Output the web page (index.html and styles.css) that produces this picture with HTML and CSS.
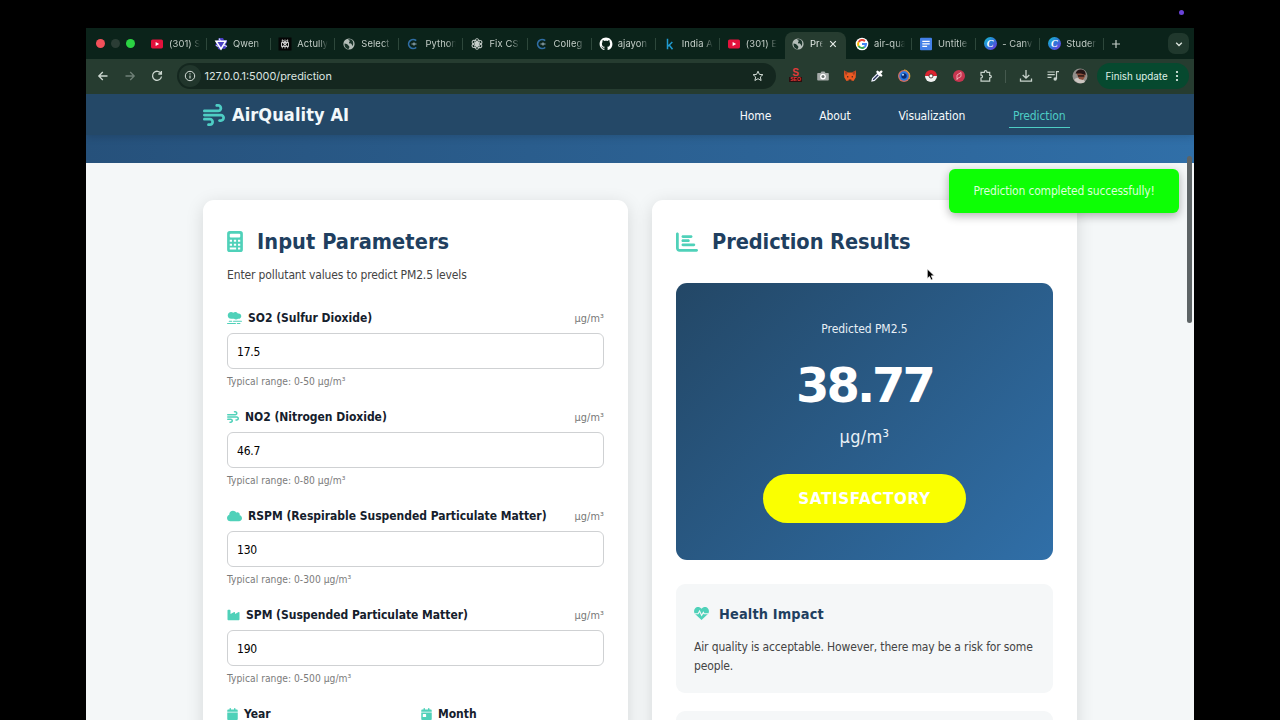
FILE: index.html
```html
<!DOCTYPE html>
<html lang="en">
<head>
  <meta charset="UTF-8">
  <meta name="viewport" content="width=device-width, initial-scale=1.0">
  <title>AirQuality AI - Prediction</title>
  <link rel="stylesheet" href="styles.css">
</head>
<body>

<!-- shared icons -->
<svg class="sprite" xmlns="http://www.w3.org/2000/svg">
  <symbol id="youtube" viewBox="0 0 14 14"><rect x="1" y="2.6" width="12" height="8.8" rx="1.6" fill="#e3123c"/><path d="M5.6 5v4L9.2 7z" fill="#fff"/></symbol>
  <symbol id="globe" viewBox="0 0 14 14"><circle cx="7" cy="7" r="5.6" fill="#b4bdb8"/><path d="M2.6 6.4c1.5.1 3 .5 3.4 1.7.2.9 1.3.8 1.4 1.8.1.8-.7 1-.8 2.2C4 11.8 2.2 9.5 2.6 6.4zM6.2 2.300c.2 1.2 1.5.8 1.6 1.8.1.9-1 .8-.8 1.700.3.9 1.8.2 2.500 1.100.6.8.4 1.800 1.200 1.800 1.300-2.700.4-6-2.600-6.500z" fill="#1b352b"/></symbol>
  <symbol id="codec" viewBox="0 0 14 14"><path d="M10.2 3.7A4.500 4.500 0 1 0 10.200 10.300" fill="none" stroke="#2f6da4" stroke-width="1.7"/><path d="M5.500 7h5M8 5.600v2.800" stroke="#93aab6" stroke-width="1.2"/></symbol>
  <symbol id="wind" viewBox="0 0 512 512"><path d="M288 32c0 17.7 14.3 32 32 32h32c17.7 0 32 14.3 32 32s-14.3 32-32 32H32c-17.7 0-32 14.3-32 32s14.3 32 32 32H352c53 0 96-43 96-96s-43-96-96-96H320c-17.7 0-32 14.3-32 32zm64 352c0 17.7 14.3 32 32 32h32c53 0 96-43 96-96s-43-96-96-96H32c-17.7 0-32 14.3-32 32s14.3 32 32 32H416c17.7 0 32 14.3 32 32s-14.3 32-32 32H384c-17.7 0-32 14.3-32 32zM128 512h32c53 0 96-43 96-96s-43-96-96-96H32c-17.7 0-32 14.3-32 32s14.3 32 32 32H160c17.7 0 32 14.3 32 32s-14.3 32-32 32H128c-17.7 0-32 14.3-32 32s14.3 32 32 32z"/></symbol>
</svg>

<div class="recording-dot"></div>

<div class="browser">
  <div class="tab-strip">
    <div class="lights"><i class="light red"></i><i class="light dim"></i><i class="light green"></i></div>
    <div class="tab"><svg><use href="#youtube"/></svg><span>(301) S</span></div>
    <div class="tab"><svg viewBox="0 0 14 14"><path d="M5 1h4l1 2h2.500l.7 2-1.400 2.200L13 9.500 11 12l-2.500-.3L7 13 4 12 3.500 9.500 1 8.500 2.400 6 1 4l3-.5z" fill="#4a3fc4"/><path d="M2 4.200h9.700L7 12z" fill="none" stroke="#fff" stroke-width="1.500"/><path d="M5 1.500 6.500 4M13 9.500 9.500 8M2 8.500l2.500 1" stroke="#d9d6ff" stroke-width="1.200"/></svg><span>Qwen</span></div>
    <div class="tab"><svg viewBox="0 0 14 14"><rect x=".5" y=".5" width="13" height="13" fill="#050505"/><path d="M7 2.500v9M3.500 5.500h7v4h-7zM4.300 2.800v2.700L7 7.500l2.700-2V2.800L7 5.200zM4.300 11.300V9.500L7 6.800l2.700 2.700v1.800" fill="none" stroke="#ddd" stroke-width=".9"/></svg><span>Actully</span></div>
    <div class="tab"><svg><use href="#globe"/></svg><span>Select</span></div>
    <div class="tab"><svg><use href="#codec"/></svg><span>Python</span></div>
    <div class="tab"><svg viewBox="0 0 14 14" fill="none" stroke="#cbd2ce" stroke-width=".9"><ellipse cx="7" cy="4.800" rx="2.200" ry="3.200"/><ellipse cx="7" cy="4.800" rx="2.200" ry="3.200" transform="rotate(60 7 7)"/><ellipse cx="7" cy="4.800" rx="2.200" ry="3.200" transform="rotate(120 7 7)"/><ellipse cx="7" cy="4.800" rx="2.200" ry="3.200" transform="rotate(180 7 7)"/><ellipse cx="7" cy="4.800" rx="2.200" ry="3.200" transform="rotate(240 7 7)"/><ellipse cx="7" cy="4.800" rx="2.200" ry="3.200" transform="rotate(300 7 7)"/></svg><span>Fix CSV</span></div>
    <div class="tab"><svg><use href="#codec"/></svg><span>Colleg</span></div>
    <div class="tab"><svg viewBox="-.7 -.7 17.4 17.4"><path fill="#fff" d="M8 0C3.58 0 0 3.58 0 8c0 3.54 2.29 6.53 5.47 7.59.4.07.55-.17.55-.38 0-.19-.01-.82-.01-1.49-2.01.37-2.53-.49-2.69-.94-.09-.23-.48-.94-.82-1.13-.28-.15-.68-.52-.01-.53.63-.01 1.08.58 1.23.82.72 1.21 1.87.87 2.33.66.07-.52.28-.87.51-1.07-1.78-.2-3.64-.89-3.64-3.95 0-.87.31-1.59.82-2.15-.08-.2-.36-1.02.08-2.12 0 0 .67-.21 2.2.82.64-.18 1.32-.27 2-.27.68 0 1.36.09 2 .27 1.53-1.04 2.2-.82 2.2-.82.44 1.1.16 1.92.08 2.12.51.56.82 1.27.82 2.15 0 3.07-1.87 3.75-3.65 3.95.29.25.54.73.54 1.48 0 1.07-.01 1.93-.01 2.2 0 .21.15.46.55.38A8.01 8.01 0 0 0 16 8c0-4.42-3.58-8-8-8z"/></svg><span>ajayon</span></div>
    <div class="tab"><svg viewBox="0 0 14 14"><path d="M4.500 1.800v10.500M9.300 5 5 9.200M6.200 8l3.300 4.300" fill="none" stroke="#209bd0" stroke-width="1.500"/></svg><span>India A</span></div>
    <div class="tab no-sep"><svg><use href="#youtube"/></svg><span>(301) E</span></div>
    <div class="tab active"><svg><use href="#globe"/></svg><span>Pre</span><svg class="close" viewBox="0 0 8 8"><path d="m1.200 1.200 5.600 5.600M6.800 1.200 1.200 6.800" stroke="#e6ece8" stroke-width="1.200"/></svg></div>
    <div class="tab"><svg viewBox="0 0 14 14" fill="none" stroke-width="2"><circle cx="7" cy="7" r="6.300" fill="#fff"/><path d="M3.700 5A4 4 0 0 1 9.900 4.200" stroke="#ea4335"/><path d="M3.600 4.900A4 4 0 0 0 3.600 9.100" stroke="#fbbc05"/><path d="M3.600 9A4 4 0 0 0 9.600 10" stroke="#34a853"/><path d="M7 7h4A4 4 0 0 1 9.500 10.100" stroke="#4285f4"/></svg><span>air-qua</span></div>
    <div class="tab"><svg viewBox="0 0 14 14"><rect x="1" y=".7" width="12" height="12.600" rx="1" fill="#4380e8"/><path d="M3.300 4.300h7.400M3.300 6.800h7.400M3.300 9.300h4.800" stroke="#fff" stroke-width="1.300"/></svg><span>Untitle</span></div>
    <div class="tab"><b class="canva">C</b><span>- Canv</span></div>
    <div class="tab"><b class="canva">C</b><span>Studer</span></div>
    <svg class="new-tab" viewBox="0 0 10 10"><path d="M5 1v8M1 5h8" stroke="#c5cfc9" stroke-width="1.200"/></svg>
    <div class="tab-search"><svg viewBox="0 0 8 8"><path d="M1.200 2.800 4 5.500l2.800-2.700" fill="none" stroke="#dce5df" stroke-width="1.300"/></svg></div>
  </div>

  <div class="toolbar">
    <svg class="nav-icon" viewBox="0 0 14 14"><path d="M11.500 7H3M6.800 3 2.800 7l4 4"/></svg>
    <svg class="nav-icon off" viewBox="0 0 14 14"><path d="M2.500 7H11M7.200 3l4 4-4 4"/></svg>
    <svg class="nav-icon" viewBox="0 0 14 14"><path d="M11 4.600A4.500 4.500 0 1 0 11.500 7.500M11.400 2v3H8.300"/></svg>
    <div class="url-bar">
      <div class="site-info"><svg viewBox="0 0 12 12"><circle cx="6" cy="6" r="4.700" fill="none" stroke="#d6ded9"/><path d="M6 5.500v3M6 3.200v1.200" stroke="#d6ded9" stroke-width="1.100"/></svg></div>
      <span class="url">127.0.0.1:5000/prediction</span>
      <svg class="star" viewBox="0 0 12 12"><path d="m6 1.200 1.400 3.200 3.500.3-2.600 2.300.8 3.500L6 8.700l-3.100 1.800.8-3.500L1.100 4.700l3.500-.3z" fill="none" stroke="#d2dcd6"/></svg>
    </div>
    <div class="extensions">
      <div class="seo"><b>S</b><b>SEO</b></div>
      <svg viewBox="0 0 14 14"><path d="M2 4h2.500l1-1.500h3l1 1.500H12q.8 0 .8.800v6q0 .8-.8.800H2q-.8 0-.8-.8v-6Q1.200 4 2 4z" fill="#a4aaa8"/><circle cx="7" cy="7.600" r="2.900" fill="#fff"/><circle cx="7" cy="7.600" r="1.500" fill="#6d7673"/></svg>
      <svg viewBox="0 0 14 14"><path d="m1 1.500 4 2h4l4-2-.3 7-2.200 3.500-2-.6H5.500l-2 .6L1.300 8.500z" fill="#ec5a22"/><path d="m1 1.500 4 2-2 3zM13 1.500l-4 2 2 3z" fill="#a83f22"/><path d="m4 7 2 1-2 .5zM10 7 8 8l2 .5zM5.700 10.500h2.600v1.300H5.700z" fill="#30221e"/></svg>
      <svg viewBox="0 0 14 14"><path d="m2 12 .6-2.400 5-5 1.800 1.800-5 5z" fill="#28345c" stroke="#eef0fb" stroke-width="1.200"/><path d="m7.500 2.800 3.700 3.700M9.300 4.700l2-2" stroke="#fff" stroke-width="2.400" stroke-linecap="round"/></svg>
      <svg viewBox="0 0 14 14"><circle cx="7" cy="7" r="6" fill="#cf6f62"/><path d="M7 1a6 6 0 0 1 5 9" fill="none" stroke="#dfb03b"/><circle cx="7" cy="7" r="4.700" fill="#2879e2"/><circle cx="7" cy="7" r="2.700" fill="#0b2b73"/><circle cx="6" cy="5.800" r="1" fill="#b8dfff"/></svg>
      <svg viewBox="0 0 14 14"><path d="M1 7a6 6 0 0 1 12 0z" fill="#dc2330"/><path d="M1 7a6 6 0 0 0 12 0z" fill="#f0f2f1"/><circle cx="7" cy="7" r="2" fill="#fff" stroke="#3d2525" stroke-width=".8"/></svg>
      <svg viewBox="0 0 14 14"><circle cx="7" cy="7" r="6" fill="#c73550"/><path d="M5 11V6l4-2.500v4L5 9.800" fill="none" stroke="#f3b4bc" stroke-width=".9"/></svg>
      <svg viewBox="0 0 14 14"><path d="M2 3.300h3.300q0-1.600 1.300-1.600T8 3.300h2.700v3q1.700 0 1.700 1.300t-1.700 1.300v3.300H2V9q1.500 0 1.500-1.400T2 6.200z" fill="none" stroke="#c8d3cc" stroke-width="1.200"/></svg>
    </div>
    <i class="divider"></i>
    <div class="tools">
      <svg viewBox="0 0 14 14"><path d="M7 1v8M3.700 6 7 9.200 10.300 6M1.500 9.500v2.700h11V9.500" fill="none" stroke="#c8d3cc" stroke-width="1.300"/></svg>
      <svg viewBox="0 0 14 14"><path d="M1.500 3h7.300M1.500 5.700h7.300M1.500 8.400h4M10.500 10V2.600h2.500" fill="none" stroke="#c8d3cc" stroke-width="1.200"/><circle cx="9.200" cy="10" r="1.700" fill="#c8d3cc"/></svg>
      <svg class="avatar" viewBox="0 0 16 16"><circle cx="8" cy="8" r="7.500" fill="#918f8b"/><path d="M2 12q2-3 6-2t5 4Q8 17.500 2 12z" fill="#ccc6c1"/><path d="M4.500 5.500Q6 1 10 2q4 1 3.300 6L11 12 7 11z" fill="#8b4f3c"/><path d="M3.500 5.500Q5 .8 10 1.500q4 1 3.600 5.500L9 5.500z" fill="#241516"/><path d="M6 7.300h6v1.300H6z" fill="#171214"/></svg>
    </div>
    <div class="update">Finish update<svg viewBox="0 0 4 12" fill="#eef7f2"><circle cx="2" cy="2" r="1.100"/><circle cx="2" cy="6" r="1.100"/><circle cx="2" cy="10" r="1.100"/></svg></div>
  </div>

  <div class="page">
    <header class="navbar">
      <div class="logo"><svg class="icon"><use href="#wind"/></svg><span>AirQuality AI</span></div>
      <nav>
        <a>Home</a>
        <a>About</a>
        <a>Visualization</a>
        <a class="current">Prediction</a>
      </nav>
    </header>
    <div class="hero"></div>

    <main class="content">
      <section class="card">
        <h2><svg class="icon calc" viewBox="0 0 384 512"><path fill-rule="evenodd" d="M64 0h256q64 0 64 64v384q0 64-64 64H64q-64 0-64-64V64Q0 0 64 0zM88 64q-24 0-24 24v48q0 24 24 24h208q24 0 24-24V88q0-24-24-24zM64 216v48h56v-48zM164 216v48h56v-48zM264 216v48h56v-48zM64 312v48h56v-48zM164 312v48h56v-48zM264 312v48h56v-48zM64 400v48h156v-48zM264 400v48h56v-48z"/></svg><span>Input Parameters</span></h2>
        <p class="intro">Enter pollutant values to predict PM2.5 levels</p>

        <div class="field">
          <label><svg class="icon wide" viewBox="0 0 640 512"><path d="M32 144c0 79.5 64.5 144 144 144H299.3c22.6 19.9 52.2 32 84.7 32s62.1-12.1 84.7-32H496c61.9 0 112-50.1 112-112s-50.1-112-112-112c-10.7 0-21 1.5-30.8 4.3C443.8 27.7 401.1 0 352 0c-32.6 0-62.4 12.2-85.1 32.3C242.1 12.2 210.5 0 176 0C96.5 0 32 64.5 32 144zM616 368H280c-13.3 0-24 10.7-24 24s10.7 24 24 24H616c13.3 0 24-10.7 24-24s-10.7-24-24-24zm-64 96H440c-13.3 0-24 10.7-24 24s10.7 24 24 24H552c13.3 0 24-10.7 24-24s-10.7-24-24-24zm-192 0H24c-13.3 0-24 10.7-24 24s10.7 24 24 24H360c13.3 0 24-10.7 24-24s-10.7-24-24-24zM224 392c0-13.3-10.7-24-24-24H96c-13.3 0-24 10.7-24 24s10.7 24 24 24H200c13.3 0 24-10.7 24-24z"/></svg><span>SO2 (Sulfur Dioxide)</span><em>µg/m³</em></label>
          <input type="text" value="17.5">
          <small>Typical range: 0-50 µg/m³</small>
        </div>
        <div class="field">
          <label><svg class="icon"><use href="#wind"/></svg><span>NO2 (Nitrogen Dioxide)</span><em>µg/m³</em></label>
          <input type="text" value="46.7">
          <small>Typical range: 0-80 µg/m³</small>
        </div>
        <div class="field">
          <label><svg class="icon wide" viewBox="0 0 640 512"><path d="M0 336c0 79.5 64.5 144 144 144H512c70.7 0 128-57.3 128-128c0-61.9-44-113.6-102.4-125.4c4.1-10.7 6.4-22.4 6.4-34.6c0-53-43-96-96-96c-19.7 0-38.1 6-53.3 16.2C367 64.2 315.3 32 256 32C167.6 32 96 103.6 96 192c0 2.7 .1 5.4 .2 8.1C40.2 219.8 0 273.2 0 336z"/></svg><span>RSPM (Respirable Suspended Particulate Matter)</span><em>µg/m³</em></label>
          <input type="text" value="130">
          <small>Typical range: 0-300 µg/m³</small>
        </div>
        <div class="field">
          <label><svg class="icon factory" viewBox="0 0 512 512"><path d="M32 32C14.3 32 0 46.3 0 64V432c0 26.5 21.5 48 48 48H464c26.5 0 48-21.5 48-48V152.2c0-18.2-19.4-29.7-35.4-21.1L320 215.4V152.2c0-18.2-19.4-29.7-35.4-21.1L128 215.4V64c0-17.7-14.3-32-32-32H32z"/></svg><span>SPM (Suspended Particulate Matter)</span><em>µg/m³</em></label>
          <input type="text" value="190">
          <small>Typical range: 0-500 µg/m³</small>
        </div>
        <div class="field-row">
          <label><svg class="icon narrow" viewBox="0 0 448 512"><path d="M96 32V64H48C21.5 64 0 85.5 0 112v48H448V112c0-26.5-21.5-48-48-48H352V32c0-17.7-14.3-32-32-32s-32 14.3-32 32V64H160V32c0-17.7-14.3-32-32-32S96 14.3 96 32zM448 192H0V464c0 26.5 21.5 48 48 48H400c26.5 0 48-21.5 48-48V192z"/></svg><span>Year</span></label>
          <label><svg class="icon narrow" viewBox="0 0 448 512"><path fill-rule="evenodd" d="M96 32V64H48C21.5 64 0 85.5 0 112v48H448V112c0-26.5-21.5-48-48-48H352V32c0-17.7-14.3-32-32-32s-32 14.3-32 32V64H160V32c0-17.7-14.3-32-32-32S96 14.3 96 32zM448 192H0V464c0 26.5 21.5 48 48 48H400c26.5 0 48-21.5 48-48V192zM80 256h112q16 0 16 16v96q0 16-16 16H80q-16 0-16-16v-96q0-16 16-16z"/></svg><span>Month</span></label>
        </div>
      </section>

      <section class="card">
        <h2 class="results-title"><svg class="icon" viewBox="0 0 512 512"><path d="M32 32c17.7 0 32 14.3 32 32V400c0 8.8 7.2 16 16 16H480c17.7 0 32 14.3 32 32s-14.3 32-32 32H80c-44.2 0-80-35.8-80-80V64C0 46.3 14.3 32 32 32zm96 96c0-17.7 14.3-32 32-32l192 0c17.7 0 32 14.3 32 32s-14.3 32-32 32H160c-17.7 0-32-14.3-32-32zm32 64H288c17.7 0 32 14.3 32 32s-14.3 32-32 32H160c-17.7 0-32-14.3-32-32s14.3-32 32-32zm0 96H416c17.7 0 32 14.3 32 32s-14.3 32-32 32H160c-17.7 0-32-14.3-32-32s14.3-32 32-32z"/></svg><span>Prediction Results</span></h2>
        <div class="result">
          <div class="result-label">Predicted PM2.5</div>
          <div class="result-value">38.77</div>
          <div class="result-unit">µg/m³</div>
          <div class="badge">SATISFACTORY</div>
        </div>
        <div class="info">
          <h3><svg class="icon" viewBox="0 0 512 512"><path d="M256 480 36 270C-10 220-10 140 36 85 95 20 190 20 256 92 322 20 417 20 476 85c46 55 46 135 0 185z"/><path d="M20 265h120l50-95 70 150 60-100 25 45h145" fill="none" stroke="#f5f7f8" stroke-width="38"/></svg><span>Health Impact</span></h3>
          <p>Air quality is acceptable. However, there may be a risk for some people.</p>
        </div>
        <div class="info"></div>
      </section>
    </main>

    <div class="toast">Prediction completed successfully!</div>
    <div class="scroll-thumb"></div>
    <svg class="cursor" viewBox="0 0 10 14"><path d="M1 1v10.200l2.400-2.100L5.100 13l1.900-.8-1.700-3.800h3.300z" fill="#000" stroke="#fff" stroke-width=".7"/></svg>
  </div>
</div>

</body>
</html>
```

FILE: styles.css
```css
* {
  box-sizing: border-box;
}

body {
  margin: 0;
  height: 720px;
  overflow: hidden;
  background-color: #000;
  font-family: "DejaVu Sans Condensed", "DejaVu Sans", sans-serif;
  font-size: 12px;
}

svg {
  display: block;
  flex-shrink: 0;
}

.sprite {
  position: absolute;
  width: 0;
  height: 0;
}

.recording-dot {
  position: absolute;
  left: 1179px;
  top: 10px;
  width: 5px;
  height: 5px;
  border-radius: 50%;
  background-color: #6a43d8;
}

/* browser window */
.browser {
  width: 1108px;
  height: 692px;
  margin: 28px 0 0 86px;
  overflow: hidden;
  background-color: #263c30;
  font-family: Inter, sans-serif;
}

.tab-strip {
  display: flex;
  align-items: center;
  height: 31px;
  background-color: #0b231a;
}

.lights {
  display: flex;
  gap: 5.5px;
  width: 57px;
  padding-left: 9.5px;
}

.light {
  width: 9.5px;
  height: 9.5px;
  border-radius: 50%;
}

.red { background-color: #f2505a; }
.dim { background-color: #2b3d35; }
.green { background-color: #2bd343; }

.tab {
  position: relative;
  display: flex;
  align-items: center;
  width: 64.1px;
  height: 31px;
  padding-left: 7px;
  color: #c4cec8;
  font-size: 9.4px;
}

.tab svg {
  width: 14px;
  height: 14px;
  margin-right: 5px;
}

.tab span {
  width: 31px;
  overflow: hidden;
  white-space: nowrap;
  letter-spacing: 0.1px;
  -webkit-mask-image: linear-gradient(90deg, #000 70%, transparent);
  mask-image: linear-gradient(90deg, #000 70%, transparent);
}

.tab:not(.active):not(.no-sep)::after {
  content: "";
  position: absolute;
  right: 0;
  top: 10px;
  width: 1px;
  height: 12px;
  background-color: #2d473b;
}

.tab.active {
  width: 61px;
  height: 27px;
  margin: 4px 1.5px 0;
  padding: 0 0 4px 5.5px;
  border-radius: 8px 8px 0 0;
  background-color: #263c30;
  color: #e6ece8;
}

.tab.active span {
  width: 13px;
}

.tab svg.close {
  width: 8px;
  height: 8px;
  margin: 0 0 0 6px;
}

.canva {
  width: 13px;
  height: 13px;
  margin: 0 5.5px 0 0.5px;
  border-radius: 50%;
  background: linear-gradient(135deg, #16c0cf, #2d78d8 50%, #7a2be0);
  color: #fff;
  font: italic bold 10px/13px "Liberation Serif", serif;
  text-align: center;
}

.new-tab {
  width: 10px;
  height: 10px;
  margin-left: 7px;
}

.tab-search {
  display: flex;
  align-items: center;
  justify-content: center;
  width: 21px;
  height: 21px;
  margin-left: auto;
  margin-right: 5px;
  border-radius: 7px;
  background-color: #20382d;
}

.tab-search svg {
  width: 8px;
  height: 8px;
}

.toolbar {
  display: flex;
  align-items: center;
  height: 35px;
  padding: 0 5px 1px 9.5px;
}

.nav-icon {
  width: 14px;
  height: 14px;
  margin-right: 13px;
  fill: none;
  stroke: #cdd8d1;
  stroke-width: 1.3;
}

.nav-icon.off {
  stroke: #6f8077;
}

.url-bar {
  display: flex;
  align-items: center;
  width: 599px;
  height: 26px;
  padding: 0 12px 0 2px;
  border-radius: 13px;
  background-color: #14271f;
}

.site-info {
  display: flex;
  align-items: center;
  justify-content: center;
  width: 22px;
  height: 22px;
  margin-right: 4px;
  border-radius: 50%;
  background-color: #21362c;
}

.site-info svg,
.star {
  width: 12px;
  height: 12px;
}

.url {
  flex: 1;
  color: #dde5e0;
  font-size: 10.9px;
}

.extensions {
  display: flex;
  gap: 13.2px;
  margin-left: 13px;
}

.extensions svg,
.tools svg {
  width: 14px;
  height: 14px;
}

.seo {
  display: flex;
  flex-direction: column;
  align-items: center;
  width: 14px;
  height: 14px;
  color: #e33b3b;
  font: bold 10px/8px "Liberation Sans", sans-serif;
}

.seo b:last-child {
  padding: 0 1px;
  background-color: #2b0f10;
  font-size: 5px;
  line-height: 5px;
}

.divider {
  width: 1px;
  height: 13px;
  margin: 0 13px 0 12.5px;
  background-color: #45594e;
}

.tools {
  display: flex;
  align-items: center;
  gap: 13px;
}

.tools .avatar {
  width: 16px;
  height: 16px;
  margin-left: -1px;
}

.update {
  display: flex;
  align-items: center;
  justify-content: space-between;
  width: 92px;
  height: 26px;
  margin-left: auto;
  padding: 0 10px 0 8.5px;
  border-radius: 13px;
  background-color: #06492f;
  color: #dff0e7;
  font-size: 9.8px;
  white-space: nowrap;
}

.update svg {
  width: 4px;
  height: 12px;
}

/* page */
.page {
  position: relative;
  height: 626px;
  overflow: hidden;
  background-color: #f4f7f8;
  font-family: "DejaVu Sans Condensed", "DejaVu Sans", sans-serif;
}

.icon {
  fill: #4fd1b9;
}

.navbar {
  position: relative;
  display: flex;
  justify-content: space-between;
  height: 41px;
  padding: 0 124px 0 117px;
  background-color: #244867;
  box-shadow: 0 2px 8px rgba(0, 0, 0, 0.15);
}

.logo {
  display: flex;
  align-items: center;
  gap: 7px;
  color: #f2f8fb;
  font-size: 18px;
  font-weight: bold;
  letter-spacing: 0.1px;
}

.logo svg {
  width: 22px;
  height: 22px;
}

.logo .icon {
  fill: #4ecdc4;
}

.navbar nav {
  display: flex;
  gap: 39px;
  padding-top: 9px;
}

.navbar a {
  height: 25px;
  padding: 0 4.5px;
  color: #f7fafc;
  font-size: 12px;
  line-height: 26px;
  letter-spacing: -0.12px;
}

.navbar a.current {
  border-bottom: 1.5px solid #4ecdc4;
  color: #4ecdc4;
}

.hero {
  height: 28px;
  background: linear-gradient(90deg, #26517b, #306fa8);
}

.content {
  display: flex;
  gap: 24px;
  padding: 37px 117px 0;
}

.card {
  width: 425px;
  height: 560px;
  padding: 24px;
  border-radius: 11px;
  background-color: #fff;
  box-shadow: 0 4px 18px rgba(0, 0, 0, 0.13);
}

h2 {
  display: flex;
  align-items: center;
  gap: 14px;
  height: 35px;
  margin: 0;
  color: #1f3f60;
  font-size: 21.6px;
  letter-spacing: 0.05px;
}

h2 svg {
  width: 22px;
  height: 22px;
}

h2 .calc {
  width: 16px;
  height: 21px;
}

.intro {
  margin: 6px 0 24px;
  height: 20px;
  line-height: 20px;
  color: #444;
  letter-spacing: -0.13px;
}

.field {
  height: 99.1px;
}

label {
  display: flex;
  align-items: center;
  height: 18px;
  color: #15202c;
  font-size: 12px;
  font-weight: bold;
  letter-spacing: -0.02px;
}

label .icon {
  width: 12px;
  height: 12px;
  margin-right: 6px;
}

label .wide {
  width: 15px;
}

label .factory {
  width: 13px;
}

label .narrow {
  width: 11px;
}

label em {
  margin-left: auto;
  color: #777;
  font-size: 10.8px;
  font-style: normal;
  font-weight: normal;
  letter-spacing: 0.1px;
}

input {
  display: block;
  width: 100%;
  height: 36px;
  margin: 6px 0 4px;
  padding: 2px 9px 0;
  border: 1.5px solid #cfd1d3;
  border-radius: 6px;
  background-color: #fff;
  color: #000;
  font-family: inherit;
  font-size: 12px;
  letter-spacing: -0.2px;
}

small {
  display: block;
  height: 17px;
  line-height: 17px;
  color: #7b7b7b;
  font-size: 10.2px;
  letter-spacing: 0.03px;
}

.field-row {
  display: grid;
  grid-template-columns: 1fr 1fr;
  gap: 11px;
}

.results-title {
  letter-spacing: -0.08px;
  margin-bottom: 23.5px;
}

.result {
  height: 277px;
  padding-top: 36px;
  border-radius: 11px;
  background: linear-gradient(135deg, #234766, #306fa8);
  color: #fff;
  text-align: center;
}

.result-label {
  height: 20px;
  line-height: 20px;
  color: #e8f0f6;
  letter-spacing: -0.05px;
}

.result-value {
  height: 72px;
  margin-top: 10px;
  line-height: 72px;
  font-family: "DejaVu Sans", sans-serif;
  font-size: 48px;
  font-weight: bold;
  letter-spacing: -3px;
}

.result-unit {
  height: 30px;
  margin-top: 1px;
  line-height: 30px;
  color: #e8f0f6;
  font-size: 18px;
  letter-spacing: 0.3px;
}

.badge {
  width: 203px;
  height: 49px;
  margin: 22.5px auto 0;
  border-radius: 25px;
  background-color: #faff00;
  line-height: 50px;
  font-family: "DejaVu Sans", sans-serif;
  font-size: 15.2px;
  font-weight: bold;
  letter-spacing: 0.6px;
}

.info {
  height: 109px;
  margin-top: 24.5px;
  padding: 18px;
  border-radius: 9px;
  background-color: #f5f7f8;
}

.info + .info {
  margin-top: 18px;
}

.info h3 {
  display: flex;
  align-items: center;
  gap: 10px;
  height: 23px;
  margin: 0 0 12px;
  color: #1f3f60;
  font-size: 14.4px;
  letter-spacing: 0.15px;
}

.info h3 svg {
  width: 15px;
  height: 15px;
}

.info p {
  margin: 0;
  padding-top: 1px;
  color: #444;
  line-height: 19.2px;
  letter-spacing: -0.14px;
}

.toast {
  position: absolute;
  left: 863px;
  top: 75px;
  width: 230px;
  height: 44px;
  border-radius: 6px;
  background-color: #0dff05;
  box-shadow: 0 3px 10px rgba(0, 0, 0, 0.3);
  color: #dcffda;
  line-height: 45px;
  text-align: center;
  letter-spacing: -0.18px;
}

.scroll-thumb {
  position: absolute;
  left: 1101px;
  top: 62px;
  width: 5px;
  height: 167px;
  border-radius: 3px;
  background-color: #5d6466;
}

.cursor {
  position: absolute;
  left: 840px;
  top: 174px;
  width: 10px;
  height: 13px;
}
```
